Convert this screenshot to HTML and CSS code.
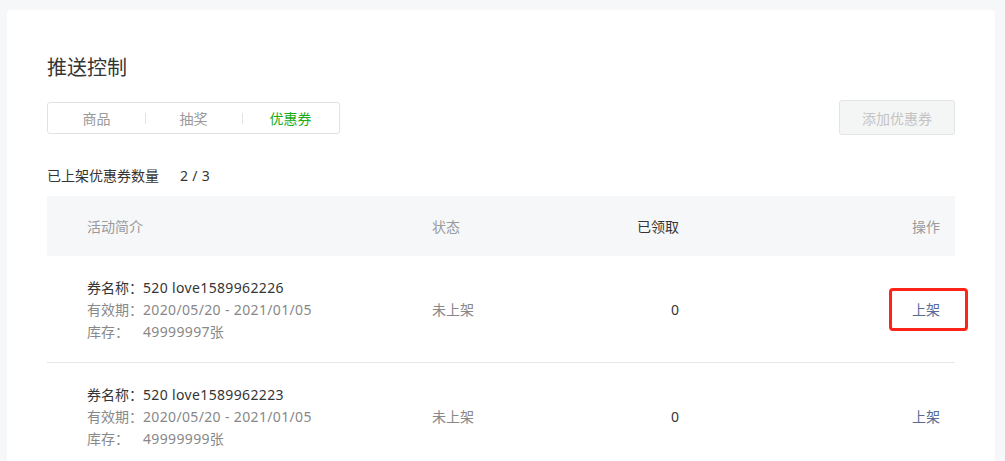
FILE: index.html
```html
<!DOCTYPE html>
<html lang="zh-CN">
<head>
<meta charset="utf-8">
<title>推送控制</title>
<link rel="stylesheet" href="styles.css">
</head>
<body>
<div class="page">
  <div class="card">
    <h1 class="title">推送控制</h1>
    <div class="toolbar">
      <div class="tabs">
        <div class="tab">商品</div>
        <div class="tab sep">抽奖</div>
        <div class="tab sep active">优惠券</div>
      </div>
      <button class="btn-add" disabled>添加优惠券</button>
    </div>
    <div class="count"><span class="count-label">已上架优惠券数量</span><span class="count-num">2 / 3</span></div>
    <div class="table">
      <div class="row head">
        <div class="c-info muted">活动简介</div>
        <div class="c-status muted">状态</div>
        <div class="c-got">已领取</div>
        <div class="c-op muted">操作</div>
      </div>
      <div class="row body">
        <div class="c-info">
          <div class="line strong"><span class="lab">券名称：</span><span class="val">520 love1589962226</span></div>
          <div class="line"><span class="lab">有效期：</span><span class="val">2020/05/20 - 2021/01/05</span></div>
          <div class="line"><span class="lab">库存：</span><span class="val">49999997张</span></div>
        </div>
        <div class="c-status grey">未上架</div>
        <div class="c-got">0</div>
        <div class="c-op"><a class="link highlight">上架</a></div>
      </div>
      <div class="row body">
        <div class="c-info">
          <div class="line strong"><span class="lab">券名称：</span><span class="val">520 love1589962223</span></div>
          <div class="line"><span class="lab">有效期：</span><span class="val">2020/05/20 - 2021/01/05</span></div>
          <div class="line"><span class="lab">库存：</span><span class="val">49999999张</span></div>
        </div>
        <div class="c-status grey">未上架</div>
        <div class="c-got">0</div>
        <div class="c-op"><a class="link">上架</a></div>
      </div>
    </div>
  </div>
</div>
</body>
</html>
```

FILE: styles.css
```css
*, *::before, *::after { box-sizing: border-box; }
html, body {
  margin: 0;
  padding: 0;
  background: #f6f7f9;
  font-family: "Noto Sans", "Noto Sans CJK SC", sans-serif;
  color: #353535;
  font-size: 14px;
}
.page {
  padding: 10px 10px 0 7px;
  height: 461px;
  overflow: hidden;
}
.card {
  background: #fff;
  border-radius: 4px;
  width: 988px;
  padding: 43px 40px 0 40px;
  height: 470px;
}
.title {
  margin: 0;
  font-size: 20px;
  line-height: 28px;
  height: 28px;
  font-weight: normal;
  color: #353535;
  font-family: "Noto Sans CJK SC", sans-serif;
}
.toolbar {
  margin-top: 19px;
  display: flex;
  justify-content: space-between;
  align-items: center;
  height: 35px;
}
.tabs {
  display: flex;
  width: 293px;
  height: 32px;
  border: 1px solid #e2e2e2;
  border-radius: 3px;
}
.tab {
  flex: 1;
  display: flex;
  align-items: center;
  justify-content: center;
  color: #9a9a9a;
  font-size: 14px;
  position: relative;
  font-family: "Noto Sans CJK SC", sans-serif;
}
.tab.sep::before {
  content: "";
  position: absolute;
  left: 0;
  top: 10px;
  height: 11px;
  width: 1px;
  background: #e2e2e2;
}
.tab.active { color: #1aad19; }
.btn-add {
  width: 116px;
  height: 35px;
  border: 1px solid #e3e4e4;
  background: #f4f5f5;
  border-radius: 3px;
  color: #c4c4c4;
  font-size: 14px;
  font-family: "Noto Sans CJK SC", sans-serif;
  padding: 0;
}
.count {
  margin-top: 29px;
  height: 22px;
  display: flex;
  align-items: center;
}
.count-label { font-family: "Noto Sans CJK SC", sans-serif; }
.count-num { margin-left: 21px; letter-spacing: 0.3px; }
.table { margin-top: 10px; }
.row {
  display: grid;
  grid-template-columns: 385px 127px 120px 261px;
  padding-right: 15px;
  align-items: center;
}
.row > div { height: 22px; display: flex; align-items: center; }
.row > .c-info { height: auto; display: block; }
.row.head {
  height: 60px;
  background: #f6f7f9;
}
.row.body {
  padding-top: 20px;
  padding-bottom: 20px;
  border-bottom: 1px solid #e6e6e6;
}
.c-info { padding-left: 40px; }
.row > .c-got, .row > .c-op { justify-content: flex-end; }
.muted { color: #9a9a9a; font-family: "Noto Sans CJK SC", sans-serif; }
.grey { color: #888; font-family: "Noto Sans CJK SC", sans-serif; }
.line {
  height: 22px;
  display: flex;
  align-items: center;
  color: #888;
  white-space: nowrap;
}
.line.strong { color: #353535; }
.lab {
  display: inline-block;
  width: 56px;
  font-family: "Noto Sans CJK SC", sans-serif;
}
.val { letter-spacing: 0.35px; }
.link {
  color: #576b95;
  text-decoration: none;
  position: relative;
  display: block;
  height: 22px;
  line-height: 22px;
  font-family: "Noto Sans CJK SC", sans-serif;
}
.link.highlight::after {
  content: "";
  position: absolute;
  left: -23px;
  top: -10px;
  width: 79px;
  height: 43px;
  border: 3px solid #ff2318;
  border-radius: 4px;
}
```
